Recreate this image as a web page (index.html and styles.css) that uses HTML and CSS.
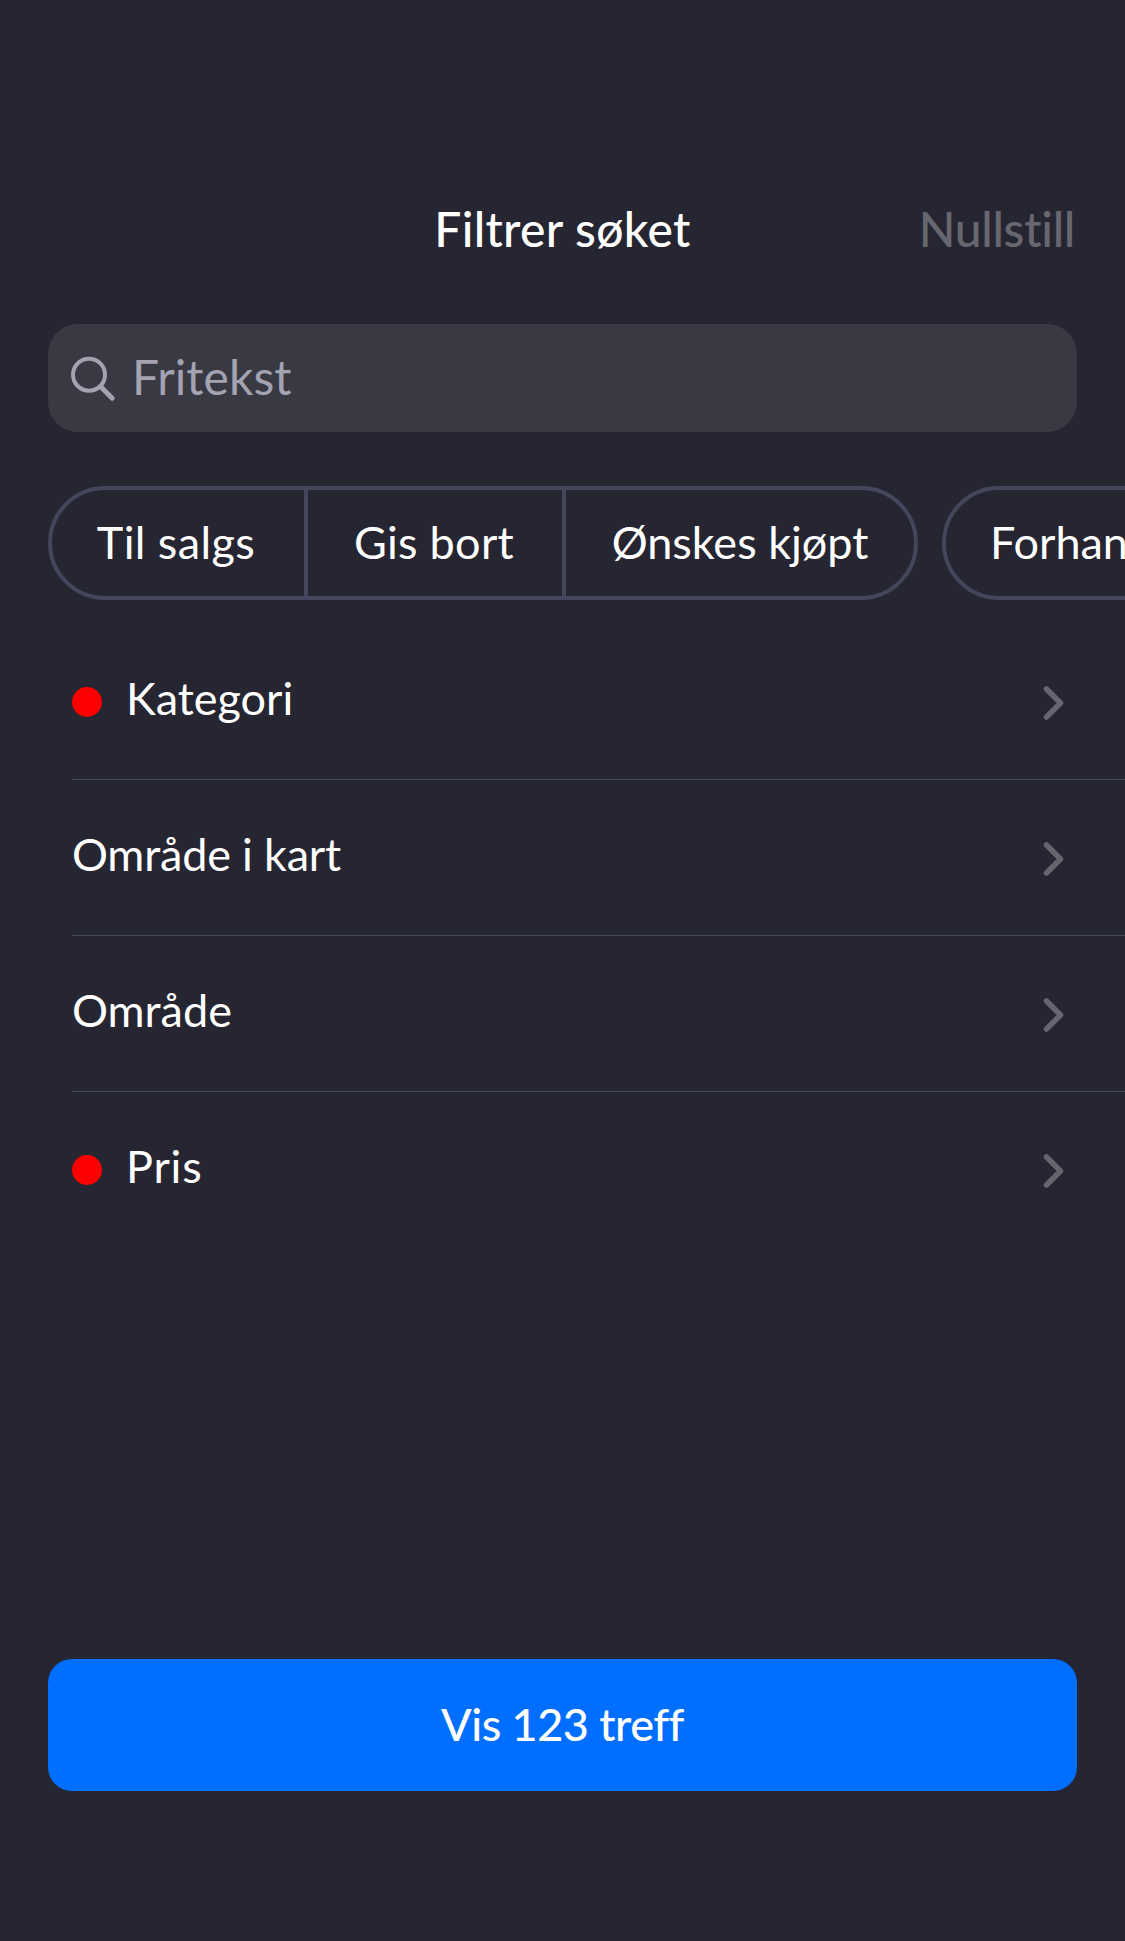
FILE: index.html
```html
<!DOCTYPE html>
<html lang="nb">
<head>
<meta charset="utf-8">
<title>Filtrer søket</title>
<link rel="stylesheet" href="styles.css">
</head>
<body>
<main class="screen">
  <header class="navbar">
    <h1 class="title">Filtrer søket</h1>
    <button class="reset" disabled>Nullstill</button>
  </header>
  <div class="search">
    <svg class="search-icon" width="48" height="48" viewBox="0 0 48 48" fill="none" stroke="currentColor" stroke-linecap="round"><circle cx="20" cy="20.7" r="16" stroke-width="4"/><path d="M31.5 32.5 43.2 44.2" stroke-width="5"/></svg>
    <span class="placeholder">Fritekst</span>
  </div>
  <div class="chips">
    <div class="segments">
      <span class="segment seg-sale">Til salgs</span>
      <span class="segment seg-free">Gis bort</span>
      <span class="segment seg-wanted">Ønskes kjøpt</span>
    </div>
    <div class="segments">
      <span class="segment seg-dealer">Forhandler</span>
    </div>
  </div>
  <ul class="filters">
    <li class="row"><i class="dot"></i><span class="label">Kategori</span><svg class="chevron" width="26" height="40" viewBox="0 0 26 40"><path d="M5.5 6 19.5 20 5.5 34"/></svg></li>
    <li class="row"><span class="label map">Område i kart</span><svg class="chevron" width="26" height="40" viewBox="0 0 26 40"><path d="M5.5 6 19.5 20 5.5 34"/></svg></li>
    <li class="row"><span class="label">Område</span><svg class="chevron" width="26" height="40" viewBox="0 0 26 40"><path d="M5.5 6 19.5 20 5.5 34"/></svg></li>
    <li class="row"><i class="dot"></i><span class="label price">Pris</span><svg class="chevron" width="26" height="40" viewBox="0 0 26 40"><path d="M5.5 6 19.5 20 5.5 34"/></svg></li>
  </ul>
  <button class="submit">Vis 123 treff</button>
</main>
</body>
</html>
```
FILE: styles.css
```css
* { box-sizing: border-box; }
body { margin: 0; background: #262632; color: #fff; font-family: Lato, "Liberation Sans", sans-serif; font-size: 45px; line-height: 56px; font-variant-ligatures: none; }
button { font: inherit; font-variant-ligatures: none; border: 0; padding: 0; background: none; }
.screen { height: 1941px; padding-top: 200px; display: flex; flex-direction: column; overflow: hidden; white-space: nowrap; }
.navbar { display: grid; grid-template-columns: 1fr auto 1fr; height: 124px; padding: 0 50px; align-items: start; }
.title { grid-column: 2; margin: 0; font-size: 48px; font-weight: 500; line-height: 58px; letter-spacing: .3px; }
.reset { justify-self: end; color: #676770; font-size: 48px; font-weight: 500; line-height: 58px; letter-spacing: -.3px; }
.search { flex: none; display: flex; align-items: center; height: 108px; margin: 0 48px; padding-left: 21px; border-radius: 30px; background: #393944; color: #a3a3b1; }
.search-icon { flex: none; }
.placeholder { margin-left: 15px; padding-bottom: 2px; font-size: 48px; letter-spacing: .1px; }
.chips { flex: none; display: flex; gap: 24px; height: 114px; margin: 54px 0 0 48px; }
.segments { flex: none; display: flex; border: 4px solid #45455b; border-radius: 57px; }
.segment { display: flex; align-items: center; justify-content: center; padding-bottom: 3px; }
.segment + .segment { border-left: 4px solid #45455b; }
.seg-sale { width: 252px; padding-right: 4px; letter-spacing: .4px; }
.seg-free { width: 258px; padding-right: 2px; letter-spacing: .3px; }
.seg-wanted { width: 352px; }
.seg-dealer { padding-left: 44px; padding-right: 44px; }
.filters { flex: none; list-style: none; margin: 24px 0 0 72px; padding: 0; }
.row { display: flex; align-items: center; height: 156px; padding-right: 58px; border-bottom: 1px solid #45455b; }
.row:last-child { border-bottom: 0; }
.dot { width: 30px; height: 30px; margin-right: 24px; border-radius: 50%; background: #f00; }
.label { flex: 1; padding-bottom: 8px; }
.map { letter-spacing: -.2px; }
.price { letter-spacing: .8px; }
.chevron { margin-top: 2px; fill: none; stroke: #65656f; stroke-width: 5.5; stroke-linecap: round; stroke-linejoin: round; }
.submit { flex: none; height: 132px; margin: 411px 48px 0; padding-bottom: 2px; border-radius: 24px; background: #006eff; color: #fff; font-weight: 500; letter-spacing: -.5px; }
```
